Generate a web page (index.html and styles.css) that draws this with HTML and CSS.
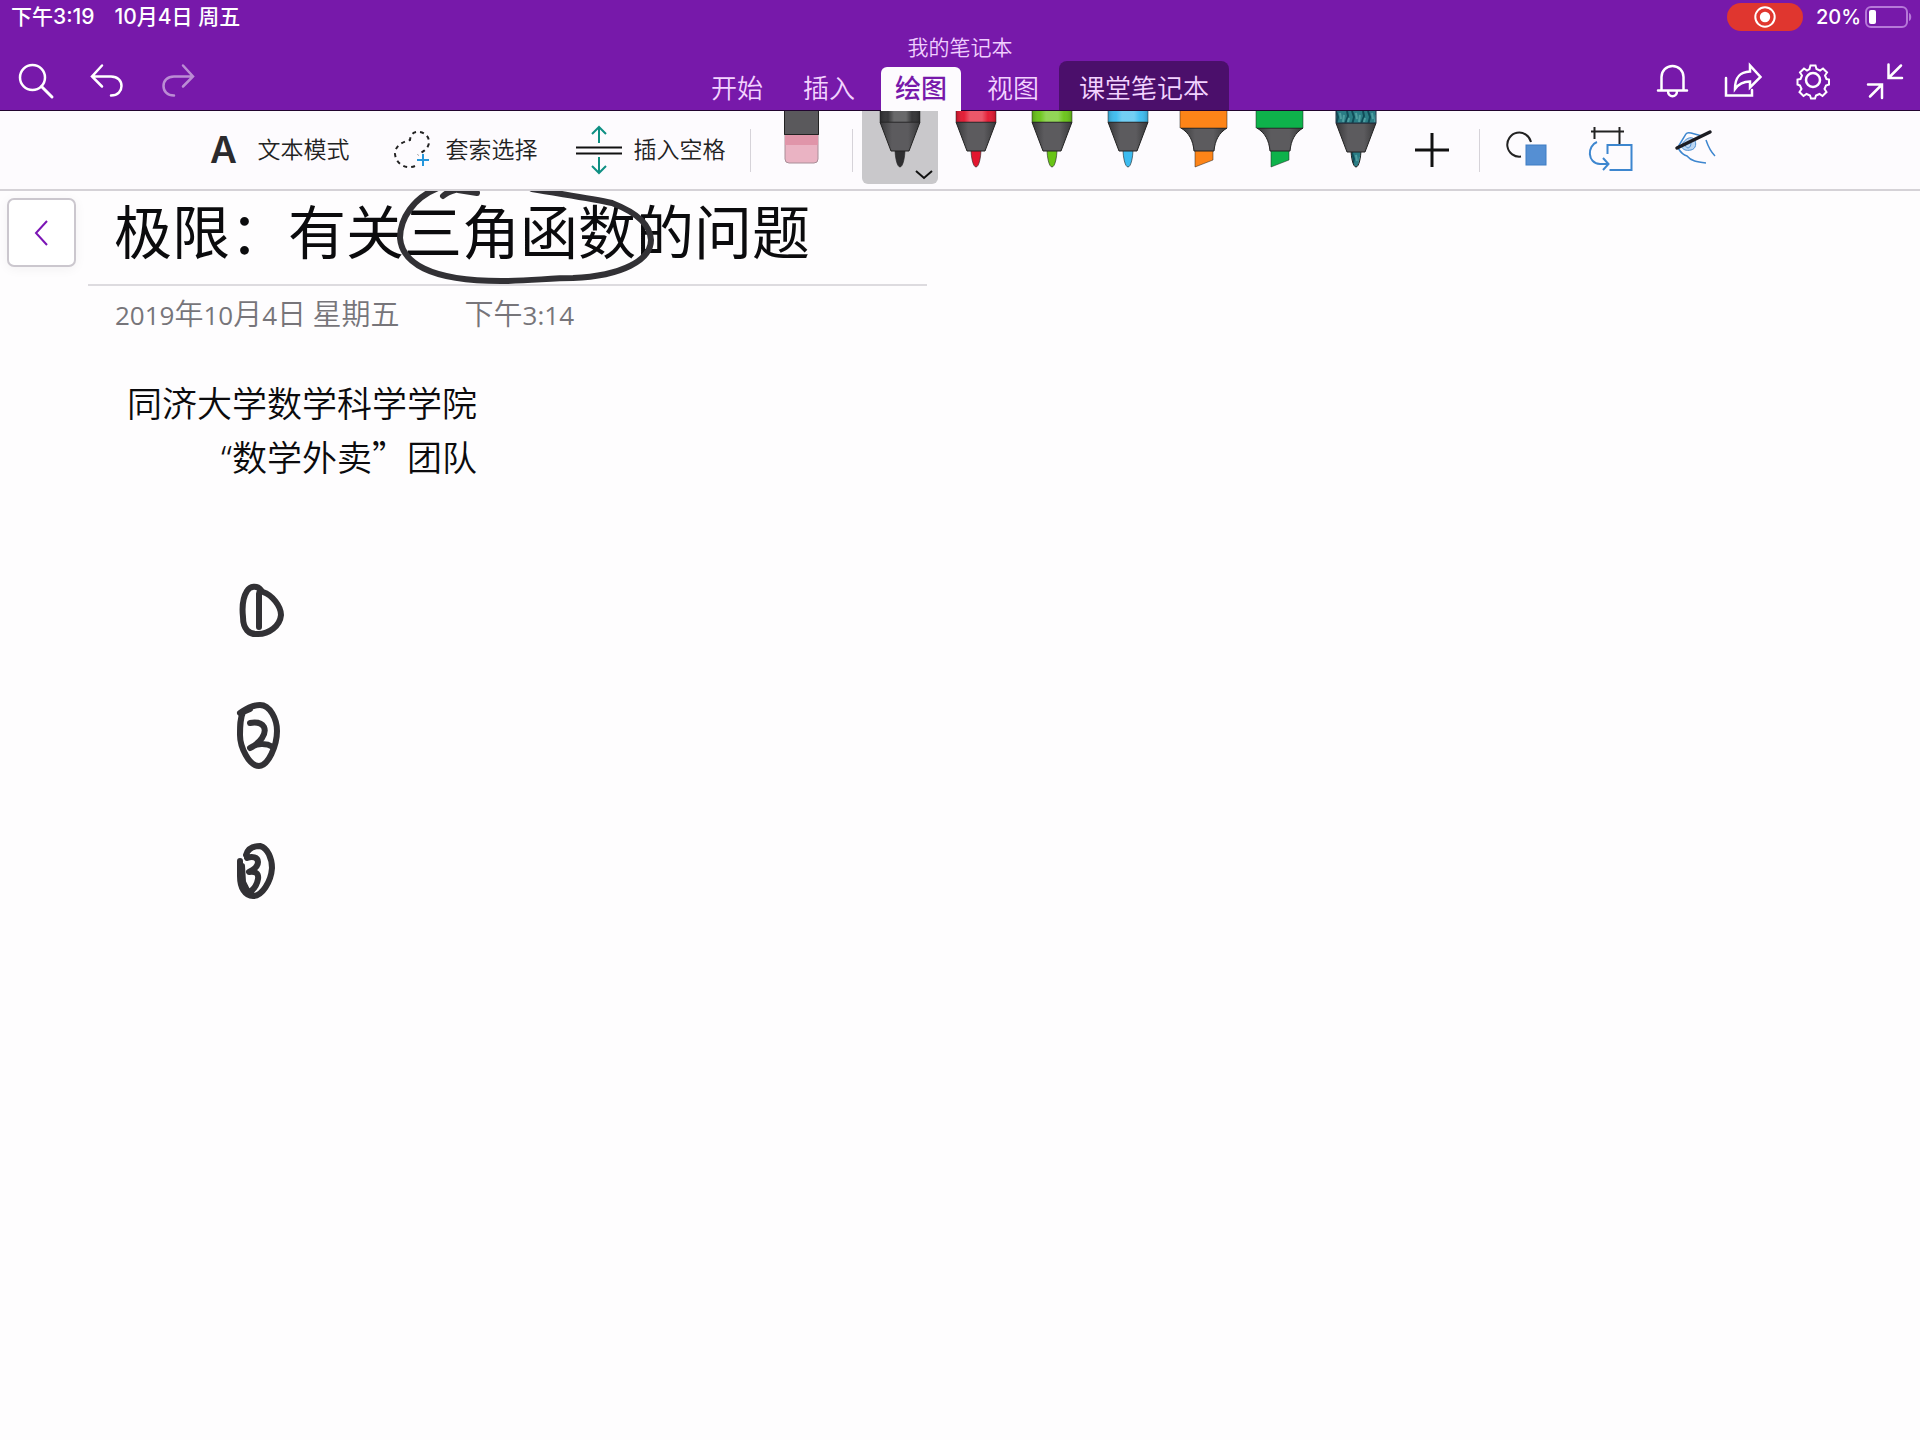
FILE: index.html
```html
<!DOCTYPE html>
<html lang="zh-CN">
<head>
<meta charset="utf-8">
<meta name="viewport" content="width=device-width, initial-scale=1">
<title>我的笔记本</title>
<link rel="stylesheet" href="styles.css">
</head>
<body>
<svg class="defs" aria-hidden="true">
  <defs>
    <linearGradient id="sheen" x1="0" x2="1" y1="0" y2="0">
      <stop offset="0" stop-color="#000" stop-opacity=".18"/>
      <stop offset=".2" stop-color="#fff" stop-opacity=".04"/>
      <stop offset=".35" stop-color="#fff" stop-opacity=".28"/>
      <stop offset=".65" stop-color="#fff" stop-opacity=".28"/>
      <stop offset=".8" stop-color="#fff" stop-opacity=".04"/>
      <stop offset="1" stop-color="#000" stop-opacity=".18"/>
    </linearGradient>
    <linearGradient id="cone" x1="0" x2="1" y1="0" y2="0">
      <stop offset="0" stop-color="#38383a"/>
      <stop offset=".3" stop-color="#5c5b5e"/>
      <stop offset=".7" stop-color="#5c5b5e"/>
      <stop offset="1" stop-color="#38383a"/>
    </linearGradient>
    <pattern id="galaxy" width="16" height="14" patternUnits="userSpaceOnUse">
      <rect width="16" height="14" fill="#2a7d85"/>
      <path d="M2 0l2 6-2 8M13 0l1 5-3 8" fill="none" stroke="#0f4c58" stroke-width="2"/>
      <path d="M6 2l1 6M10 4l-1 7M15 7l-1 4" fill="none" stroke="#4f9fa2" stroke-width="2"/>
    </pattern>
    <symbol id="pen" viewBox="0 0 76 60">
      <path d="M33 38h10c0 8-2 18-5 18s-5-10-5-18z" fill="currentColor" stroke="#222" stroke-opacity=".6"/>
      <path d="M18 11h40L47 40H29z" fill="url(#cone)" stroke="#222"/>
      <path d="M18 0h40v11H18z" fill="currentColor"/>
      <path d="M18 0h40v11H18z" fill="url(#sheen)"/>
      <path d="M18 0v11h40V0" fill="none" stroke="#222" stroke-opacity=".5"/>
    </symbol>
    <symbol id="marker" viewBox="0 0 76 60">
      <path d="M29 39h18v10l-18 7z" fill="currentColor" stroke="#222" stroke-opacity=".5"/>
      <path d="M15 17h46c-8 5-12 12-13 23H28c-1-11-5-18-13-23z" fill="url(#cone)" stroke="#222"/>
      <path d="M14 0v17h47V0" fill="currentColor" stroke="#222" stroke-opacity=".5"/>
    </symbol>
  </defs>
</svg>

<header class="app-header">
  <div class="status">
    <div class="status-left"><span>下午3:19</span><span>10月4日 周五</span></div>
    <div class="status-right">
      <span class="recording">
        <svg width="24" height="24" viewBox="0 0 24 24"><circle cx="12" cy="12" r="9.7" fill="none" stroke="#fff" stroke-width="2"/><circle cx="12" cy="12" r="5.2" fill="#fff"/></svg>
      </span>
      <span class="percent">20%</span>
      <svg width="48" height="24" viewBox="0 0 48 24"><rect x="1" y="2" width="41" height="20" rx="5" fill="none" stroke="#b678d8" stroke-width="2"/><rect x="4" y="5" width="7" height="14" rx="2" fill="#fff"/><path d="M44 8c3 1 3 7 0 8z" fill="#b678d8"/></svg>
    </div>
  </div>
  <div class="bar">
    <div class="bar-side">
      <button class="icon-btn" aria-label="搜索"><svg width="44" height="44" viewBox="0 0 44 44"><circle cx="18.500" cy="18.500" r="12.500"/><path d="M27.500 27.500L38 38" stroke-width="3"/></svg></button>
      <button class="icon-btn" aria-label="撤消"><svg width="44" height="44" viewBox="0 0 44 44"><path d="M17 6.500L7 17.500l10 10M7.500 17.500H26c7 0 10.500 4.500 10.500 9.500S33 36.500 26 36.500"/></svg></button>
      <button class="icon-btn faded" aria-label="恢复"><svg width="44" height="44" viewBox="0 0 44 44"><path d="M27 6.500l10 11-10 10M36.500 17.500H18C11 17.500 7.500 22 7.500 27S11 36.500 18 36.500"/></svg></button>
    </div>
    <div class="bar-center">
      <div class="book-name">我的笔记本</div>
      <nav class="tabs">
        <button class="tab">开始</button>
        <button class="tab">插入</button>
        <button class="tab active">绘图</button>
        <button class="tab">视图</button>
        <button class="tab class-book">课堂笔记本</button>
      </nav>
    </div>
    <div class="bar-side end">
      <button class="icon-btn" aria-label="通知"><svg width="44" height="44" viewBox="0 0 44 44"><path d="M8 31.500h29M11.500 31V18a11 11 0 0 1 22 0v13M18 32c0 7 9 7 9 0"/></svg></button>
      <button class="icon-btn" aria-label="共享"><svg width="44" height="44" viewBox="0 0 44 44"><path d="M5 19v17.500h26V31M14 30c0-11 4-17 15-17.500V6.500L39.500 18 29 28.500v-6c-7 0-11 2-15 7.500z"/></svg></button>
      <button class="icon-btn" aria-label="设置"><svg width="44" height="44" viewBox="0 0 44 44"><circle cx="21" cy="21" r="7"/><path d="M18.500 6.500h5l1 3.500 3.500 1.500 3-2 4 4-2 3 1.500 3.500 2.500.5v5l-3 1-1.500 3.500 2 3-4 4-3-2-3.500 1.500-1 3h-4l-1-3-3.500-1.500-3 2-4-4 2-3L8 26.500 5.500 25.500v-5l3-.5 1.500-3.500-2-3 4-4 3 2 2.500-1.500z" stroke-width="2"/></svg></button>
      <button class="icon-btn" aria-label="退出全屏"><svg width="44" height="44" viewBox="0 0 44 44"><path d="M25.500 5.500v13.500H39M38 6.500L26 18.500M5 25.500h14V39M7 37.500l12-12"/></svg></button>
    </div>
  </div>
</header>

<div class="toolbar">
  <div class="text-tools">
    <button class="tool"><span class="tool-icon letter">A</span><span class="tool-label">文本模式</span></button>
    <button class="tool"><span class="tool-icon"><svg width="48" height="48" viewBox="0 0 48 48"><path d="M27 40C18 44 8 38 7 28c0-8 7-12 15-14 1-9 7-8 10-8 7 1 11 8 8 14-2 5-7 6-10 9" fill="none" stroke="#222" stroke-width="2" stroke-dasharray="4 4"/><path d="M35 28v12M29 34h12" stroke="#2596dc" stroke-width="2"/></svg></span><span class="tool-label">套索选择</span></button>
    <button class="tool"><span class="tool-icon"><svg width="48" height="50" viewBox="0 0 48 50"><path d="M0 22.500h46M0 28.500h46" stroke="#111" stroke-width="2"/><path d="M23 18V2M16 9l7-7 7 7M23 32v16M16 41l7 7 7-7" fill="none" stroke="#0e8f83" stroke-width="2"/></svg></span><span class="tool-label">插入空格</span></button>
  </div>
  <span class="divider"></span>
  <div class="pens">
    <button class="pen" aria-label="橡皮擦"><svg width="76" height="60" viewBox="0 0 76 60"><path d="M21 24h33v24a4 4 0 0 1-4 4H25a4 4 0 0 1-4-4z" fill="#eab3c3" stroke="#a98e98"/><path d="M21 24h33v10H21z" fill="#e095a9"/><path d="M20 0h35v24H20z" fill="#5a595c"/><path d="M20.500 0v23.500h34V0" fill="none" stroke="#222"/></svg></button>
  </div>
  <span class="divider"></span>
  <div class="pens">
    <button class="pen selected ink-black" aria-label="黑色笔" aria-pressed="true"><svg width="76" height="60"><use href="#pen"/></svg><svg class="more" width="18" height="10" viewBox="0 0 18 10"><path d="M1 1l8 7 8-7" fill="none" stroke="#111" stroke-width="2"/></svg></button>
    <button class="pen ink-red" aria-label="红色笔"><svg width="76" height="60"><use href="#pen"/></svg></button>
    <button class="pen ink-lime" aria-label="绿色笔"><svg width="76" height="60"><use href="#pen"/></svg></button>
    <button class="pen ink-sky" aria-label="蓝色笔"><svg width="76" height="60"><use href="#pen"/></svg></button>
    <button class="pen ink-orange" aria-label="橙色荧光笔"><svg width="76" height="60"><use href="#marker"/></svg></button>
    <button class="pen ink-green" aria-label="绿色荧光笔"><svg width="76" height="60"><use href="#marker"/></svg></button>
    <button class="pen" aria-label="星系笔"><svg width="76" height="60" viewBox="0 0 76 60"><path d="M33 38h10c0 8-2 18-5 18s-5-10-5-18z" fill="url(#galaxy)" stroke="#222"/><path d="M18 12h40L47 41H29z" fill="url(#cone)" stroke="#222"/><path d="M18 0v12h40V0" fill="url(#galaxy)" stroke="#234"/></svg></button>
    <button class="pen plus" aria-label="添加笔"><svg width="36" height="36" viewBox="0 0 36 36"><path d="M18 1v34M1 18h34" stroke="#111" stroke-width="3"/></svg></button>
  </div>
  <span class="divider"></span>
  <div class="extras">
    <button class="extra" aria-label="形状"><svg width="48" height="48" viewBox="0 0 48 48"><path d="M18 30.500A12 12 0 1 1 28 16" fill="none" stroke="#222" stroke-width="2"/><rect x="23" y="19" width="20" height="20" fill="#558fd3" stroke="#3f7cc4"/></svg></button>
    <button class="extra" aria-label="墨迹转换为形状"><svg width="48" height="48" viewBox="0 0 48 48"><path d="M4 5.500h33M7.500 1v12M32.500 1v17" stroke="#222" stroke-width="2"/><path d="M20.500 28v-9h24v25h-22" fill="none" stroke="#3d86cf" stroke-width="2"/><path d="M10 16C0 20 0 37 13 38h8M16 32l5.500 6-5.500 6" fill="none" stroke="#3d86cf" stroke-width="2"/></svg></button>
    <button class="extra" aria-label="用手指绘图"><svg width="48" height="48" viewBox="0 0 48 48"><path d="M10 20C14 12 20 10 23 13C26 17 25 23 20 24C15 25 12 24 10 20z" fill="#bcd6f2" stroke="#4c8fd2"/><path d="M14 19c2 5 6 3 6-2" fill="none" stroke="#4c8fd2"/><path d="M7 21L15 8Q16 6 20 7L31 10M35 14C37 20 40 26 44 30M7 22C10 27 12 29 16 30C20 35 26 36 35 37" fill="none" stroke="#3d86cf" stroke-width="1.500"/><path d="M6 22L39 6" stroke="#1c1c22" stroke-width="3.500" stroke-linecap="round"/></svg></button>
  </div>
</div>

<main class="canvas">
  <button class="back" aria-label="返回"><svg width="16" height="28" viewBox="0 0 16 28"><path d="M13 2L2 14l11 12" fill="none" stroke="#7b15b5" stroke-width="2"/></svg></button>
  <article class="note">
    <h1>极限：有关三角函数的问题</h1>
    <p class="stamp"><time><span class="num">2019</span>年<span class="num">10</span>月<span class="num">4</span>日 星期五</time><time>下午<span class="num">3:14</span></time></p>
    <div class="body-text">
      <p>同济大学数学科学学院</p>
      <p class="team"><span class="quote">“</span>数学外卖”团队</p>
    </div>
  </article>
  <svg class="ink" aria-hidden="true">
    <g transform="translate(0 -191)">
      <path d="M438 188C413 198 400 219 400 238C402 262 428 281 501 281C530 281 550 278 573 278C622 276 651 260 651 240C650 226 640 214 612 203C590 198 560 194 532 189"/>
      <path d="M443 196C449 190 459 190 462 187M458 190L477 193"/>
      <path d="M261 590C257 585 250 586 247 591C242 599 242 608 243 617C243 629 249 635 258 634C269 634 280 626 281 615C281 606 272 595 263 592L260 590L259 594V627"/>
      <path d="M240 713C246 709 252 705 260 705C270 705 277 719 277 731C277 746 268 766 259 766C249 766 240 747 240 735C240 725 240 719 243 712L250 709M250 723C256 722 261 722 264 727C267 734 260 743 250 748C257 743 266 743 273 747"/>
      <path d="M246 855C248 848 254 846 260 846C268 848 272 859 272 868C271 882 262 896 253 896C245 896 240 888 240 876V861M247 858C252 856 258 857 258 862C258 867 253 870 249 872C255 871 259 873 258 879C257 885 254 889 250 892M242 866L243 882L249 894"/>
    </g>
  </svg>
</main>
</body>
</html>
```

FILE: styles.css
```css
* { box-sizing: border-box; margin: 0; padding: 0; }

body {
  display: flex;
  flex-direction: column;
  min-height: 100vh;
  background: #fefdfe;
  color: #0b0b0d;
  font-family: "Noto Sans CJK SC", sans-serif;
}

button {
  border: 0;
  background: none;
  color: inherit;
  font: inherit;
  cursor: pointer;
}

svg { display: block; }

.defs { position: absolute; width: 0; height: 0; }

/* Header */
.app-header {
  background: #7719aa;
  color: #fff;
  border-bottom: 1px solid #22052f;
}

.status {
  display: flex;
  justify-content: space-between;
  align-items: center;
  height: 34px;
  padding: 0 7px 0 11px;
  font: 500 21px/34px Inter, "Noto Sans CJK SC", sans-serif;
}

.status-left { display: flex; gap: 20px; }
.status-right { display: flex; align-items: center; }

.recording {
  display: flex;
  align-items: center;
  justify-content: center;
  width: 76px;
  height: 28px;
  border-radius: 14px;
  background: #e0362f;
}

.percent { width: 62px; padding-right: 4px; text-align: right; font-size: 20px; }

.bar {
  display: grid;
  grid-template-columns: 1fr auto 1fr;
  height: 76px;
}

.bar-side { display: flex; align-items: flex-end; padding-bottom: 7px; }
.bar-side.end { justify-content: flex-end; }

.icon-btn {
  display: flex;
  justify-content: center;
  width: 71px;
  height: 44px;
}

.icon-btn svg {
  fill: none;
  stroke: #fff;
  stroke-width: 2.5;
  stroke-linecap: round;
}

.faded { opacity: .5; }

.book-name {
  height: 27px;
  color: #f1cfff;
  font-size: 21px;
  font-weight: 350;
  line-height: 24px;
  text-align: center;
}

.tabs { display: flex; align-items: flex-end; height: 49px; }

.tab {
  height: 43px;
  padding: 0 20px 4px;
  color: #f3d3ff;
  font-size: 26px;
  font-weight: 350;
  line-height: 39px;
}

.tab.active {
  position: relative;
  height: 44px;
  margin: 0 6px -1px;
  padding: 0 14px 5px;
  border-radius: 6px 6px 0 0;
  background: #fdfbfe;
  color: #7719aa;
  font-weight: 500;
}

.tab.class-book {
  height: 49px;
  padding-top: 6px;
  border-radius: 8px 8px 0 0;
  background: #4b0f6b;
}

/* Drawing toolbar */
.toolbar {
  display: flex;
  justify-content: center;
  align-items: center;
  height: 80px;
  padding-left: 16px;
  background: #fdfbfe;
  border-bottom: 2px solid #d5d2d7;
}

.text-tools { display: flex; gap: 38px; }

.tool {
  display: flex;
  align-items: center;
  gap: 10px;
  color: #222;
  font-size: 23px;
  font-weight: 350;
  line-height: 50px;
}

.tool-icon { display: flex; justify-content: center; width: 48px; }
.tool-label { padding-bottom: 3px; line-height: 47px; }
.letter { color: #2b2a2d; font: 600 37px/50px Inter, sans-serif; }

.divider { width: 1px; height: 43px; margin: 0 9px; background: #d6d3d9; }
.text-tools + .divider { margin: 0 13px 0 24px; }
.extras { display: flex; margin-left: -4px; }

.pens { display: flex; align-self: stretch; }
.pens + .divider { margin: 0 9px 0 12px; }
.plus { margin-right: -3px; }

.pen {
  position: relative;
  width: 76px;
  height: 73px;
}

.pen.selected { border-radius: 0 0 6px 6px; background: #c9c8cb; }
.pen:not(.plus) { display: flex; align-items: flex-start; }
.pen .more { position: absolute; right: 5px; bottom: 4px; }
.pen.plus { display: flex; align-items: center; justify-content: center; height: 78px; }

.ink-black { color: #2f2f31; }
.ink-red { color: #e3162f; }
.ink-lime { color: #68c416; }
.ink-sky { color: #3cbcf0; }
.ink-orange { color: #fd8418; }
.ink-green { color: #0eb24b; }

.extra { display: flex; justify-content: center; width: 84px; }

/* Note page */
.canvas {
  position: relative;
  flex: 1;
  display: flex;
  align-items: flex-start;
  gap: 12px;
  padding: 7px;
}

.back {
  display: flex;
  align-items: center;
  justify-content: center;
  width: 69px;
  height: 69px;
  border: 2px solid #cbc7ce;
  border-radius: 7px;
  background: #fff;
  box-shadow: 0 2px 12px #0000000d;
}

.note { flex: 1; max-width: 839px; }

h1 {
  height: 88px;
  padding-left: 26px;
  border-bottom: 2px solid #dddbdf;
  font-size: 58px;
  font-weight: 400;
  line-height: 62px;
  white-space: nowrap;
}

.stamp {
  display: flex;
  gap: 65px;
  padding-left: 27px;
  color: #77757a;
  font-size: 29px;
  font-weight: 350;
  line-height: 52px;
}

.num { font: 400 26px "Open Sans", sans-serif; }

.body-text {
  width: 389px;
  margin-top: 37px;
  padding-left: 39px;
  font-size: 35px;
  font-weight: 350;
  line-height: 54px;
  white-space: nowrap;
}

.team { text-align: right; }
.quote { font-family: "Noto Sans", sans-serif; }

.ink {
  position: absolute;
  inset: 0;
  width: 100%;
  height: 100%;
  overflow: hidden;
  fill: none;
  stroke: #323135;
  stroke-width: 6;
  stroke-linecap: round;
  stroke-linejoin: round;
  pointer-events: none;
}
```
